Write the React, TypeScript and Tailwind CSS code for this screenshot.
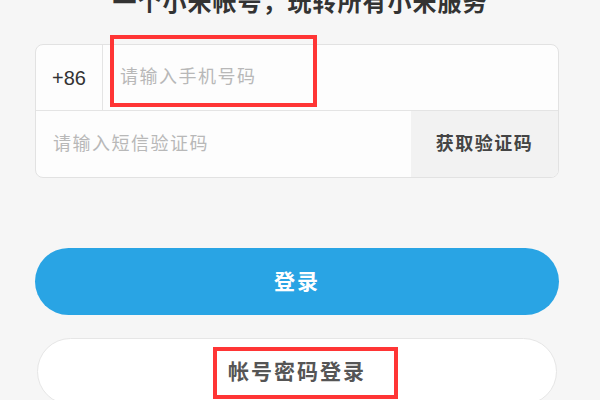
import React from 'react';

const font = {
  fontFamily: '"Liberation Sans", "Noto Sans CJK SC", sans-serif',
};

export default function App() {
  return (
    <div
      className="relative w-[600px] h-[400px] overflow-hidden bg-[#f6f6f6] pl-[35px] pr-[41px]"
      style={font}
    >
      <h1 className="-mt-[9px] -mr-[6px] h-[24px] text-center text-[24px] leading-[24px] font-bold tracking-[1px] text-[#333]">
        一个小米帐号，玩转所有小米服务
      </h1>

      <div className="mt-[29px] rounded-[8px] border border-[#e2e2e2] bg-[#fdfdfd] overflow-hidden">
        <div className="flex h-[66px] items-center border-b border-[#e4e4e4]">
          <div className="flex h-full w-[67px] items-center justify-center border-r border-[#e4e4e4] text-[20px] text-[#333]">
            +86
          </div>
          <div className="pl-[17px] text-[18px] tracking-[1.5px] text-[#b8b8b8]">
            请输入手机号码
          </div>
        </div>
        <div className="flex h-[66px] items-center">
          <div className="flex-1 pl-[17px] text-[18px] tracking-[1.5px] text-[#b8b8b8]">
            请输入短信验证码
          </div>
          <div className="flex h-full w-[147px] items-center justify-center bg-[#f2f2f2] text-[18px] font-bold tracking-[1.5px] text-[#444]">
            获取验证码
          </div>
        </div>
      </div>

      <button className="mt-[70px] flex h-[67px] w-full items-center justify-center rounded-full bg-[#29a4e4] text-[21px] font-bold tracking-[2px] text-white">
        登录
      </button>

      <button className="mx-[2px] mt-[23px] flex h-[67px] w-[calc(100%-4px)] items-center justify-center rounded-full border border-[#e6e6e6] bg-white text-[21px] font-bold tracking-[2px] text-[#555]">
        帐号密码登录
      </button>

      {/* red annotation boxes */}
      <div className="absolute left-[110px] top-[35px] h-[72px] w-[207px] border-[4px] border-[#ff3535]" />
      <div className="absolute left-[213px] top-[347px] h-[52px] w-[185px] border-[4px] border-[#ff3535]" />
    </div>
  );
}
